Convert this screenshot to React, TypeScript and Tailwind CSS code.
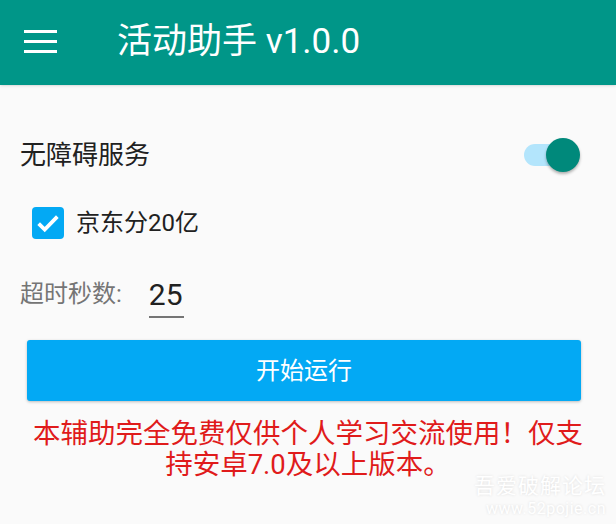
import { useState } from "react";

const FONT = { fontFamily: '"Roboto", "Noto Sans CJK SC", sans-serif' };

export default function App() {
  const [enabled, setEnabled] = useState(true);
  const [checked, setChecked] = useState(true);

  return (
    <div className="relative h-[524px] w-[616px] overflow-hidden bg-[#fafafa]" style={FONT}>
      {/* Toolbar */}
      <header className="flex h-[85px] items-center bg-[#009688] pb-[2px] text-white shadow-sm">
        <div className="ml-[24px] flex w-[33px] flex-col gap-[7px]">
          <span className="h-[3px] w-full bg-white" />
          <span className="h-[3px] w-full bg-white" />
          <span className="h-[3px] w-full bg-white" />
        </div>
        <h1 className="ml-[60px] text-[35px] leading-none">活动助手 v1.0.0</h1>
      </header>

      <main className="px-[20px] pt-[52px]">
        {/* Accessibility switch */}
        <div className="flex h-[36px] items-center justify-between">
          <span className="text-[26px] text-[#212121]">无障碍服务</span>
          <button
            onClick={() => setEnabled(!enabled)}
            className="relative mr-[16px] h-[36px] w-[56px]"
          >
            <span className="absolute left-0 right-[3px] top-[7px] h-[22px] rounded-full bg-[#b3e5fc]" />
            <span className="absolute right-0 top-[1px] h-[34px] w-[34px] rounded-full bg-[#00897b] shadow-[0_2px_3px_rgba(0,0,0,0.3)]" />
          </button>
        </div>

        {/* Checkbox */}
        <label className="mt-[32px] flex items-center gap-[12px] pl-[12px]">
          <button
            onClick={() => setChecked(!checked)}
            className="flex h-[32px] w-[32px] items-center justify-center rounded-[4px] bg-[#03a9f4]"
          >
            <svg viewBox="0 0 24 24" className="h-[28px] w-[28px]" fill="none" stroke="white" strokeWidth="3.2">
              <path d="M4 12.5l5.2 5.2L20 6.5" />
            </svg>
          </button>
          <span className="text-[24px] text-[#212121]">京东分20亿</span>
        </label>

        {/* Timeout */}
        <div className="mt-[35px] flex items-end">
          <span className="pb-[6px] text-[24px] text-[#757575]">超时秒数:</span>
          <div className="ml-[27px] w-[35px] border-b-2 border-[#757575] pb-[2px] text-[30px] leading-[38px] text-[#212121]">
            25
          </div>
        </div>

        {/* Start button */}
        <button className="mt-[22px] ml-[7px] flex h-[61px] w-[554px] items-center justify-center rounded-[3px] bg-[#03a9f4] text-[24px] text-white shadow-[0_1px_3px_rgba(0,0,0,0.25)]">
          开始运行
        </button>

        <p className="mt-[17px] text-center text-[27.5px] leading-[31px] text-[#e01b1b]">
          本辅助完全免费仅供个人学习交流使用！仅支
          <br />
          持安卓7.0及以上版本。
        </p>
      </main>

      {/* Watermark */}
      <div className="absolute bottom-[5px] right-[10px] text-right text-white [text-shadow:0_0_3px_rgba(0,0,0,0.12)]">
        <div className="text-[21px] leading-[26px] tracking-[1px]">吾爱破解论坛</div>
        <div className="text-[16px] leading-[20px] tracking-[0.5px]">www.52pojie.cn</div>
      </div>
    </div>
  );
}
